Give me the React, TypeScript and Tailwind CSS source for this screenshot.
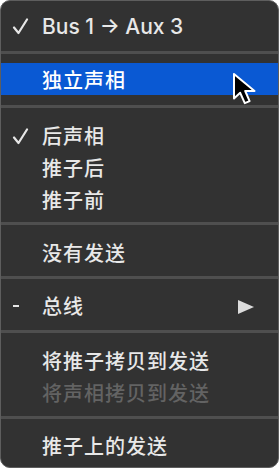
const font = {
  fontFamily: 'Inter, "Noto Sans CJK SC", sans-serif',
}

function Sep({ className = "" }: { className?: string }) {
  return <div className={"h-[3px] bg-[#4f4f4f] " + className} />
}

function Check({ top = "top-[8px]" }: { top?: string }) {
  return (
    <svg className={"absolute left-[11px] " + top} width="17" height="17" viewBox="0 0 17 17">
      <path d="M2 9.5 L6.5 15 L15 1.5" fill="none" stroke="#e6e6e6" strokeWidth="2.2" strokeLinecap="round" strokeLinejoin="round" />
    </svg>
  )
}

function Item({
  label,
  check,
  dash,
  disabled,
  active,
  arrow,
}: {
  label: string
  check?: boolean
  dash?: boolean
  disabled?: boolean
  active?: boolean
  arrow?: boolean
}) {
  return (
    <div
      className={
        "relative flex h-8 items-center pl-[41px] text-[20px] font-medium leading-none " +
        (active ? "bg-[#0a59d3] text-white " : "") +
        (disabled ? "text-[#636363]" : "text-[#e8e8e8]")
      }
    >
      {check && <Check top="top-[9px]" />}
      {dash && <span className="absolute left-[12px] top-[16px] h-[2px] w-[6px] bg-[#e6e6e6]" />}
      <span className="relative top-[2px] tracking-[1px]">{label}</span>
      {arrow && (
        <svg className="absolute left-[237px] top-[11px]" width="17" height="14" viewBox="0 0 17 14">
          <path d="M0 0 L16 7 L0 14 Z" fill="#dcdcdc" />
        </svg>
      )}
    </div>
  )
}

export default function App() {
  return (
    <div className="h-[468px] w-[279px] bg-white" style={font}>
      <div className="relative h-[468px] w-[279px] overflow-hidden rounded-[10px] border border-[#5e5e5e] bg-[#323232] pt-[9px]">
        <div className="relative flex h-8 items-center pl-[41px] text-[21px] font-medium leading-none text-[#e8e8e8]">
          <Check />
          <span>Bus 1 → Aux 3</span>
        </div>
        <Sep className="mt-[9px] mb-[9px]" />
        <Item label="独立声相" active />
        <Sep className="mt-[10px] mb-[11px]" />
        <Item label="后声相" check />
        <Item label="推子后" />
        <Item label="推子前" />
        <Sep className="mt-[7px] mb-[11px]" />
        <Item label="没有发送" />
        <Sep className="mt-[8px] mb-[10px]" />
        <Item label="总线" dash arrow />
        <Sep className="mt-[9px] mb-[11px]" />
        <Item label="将推子拷贝到发送" />
        <Item label="将声相拷贝到发送" disabled />
        <Sep className="mt-[8px] mb-[10px]" />
        <Item label="推子上的发送" />

        <svg className="absolute left-[231px] top-[71px]" width="28" height="34" viewBox="0 0 28 34">
          <path
            d="M2 2 L2 26.5 L8.2 20.8 L12.8 31.2 L17.6 29.2 L13.2 19 L22.5 19 Z"
            fill="#000"
            stroke="#fff"
            strokeWidth="2"
            strokeLinejoin="round"
          />
        </svg>
      </div>
    </div>
  )
}
